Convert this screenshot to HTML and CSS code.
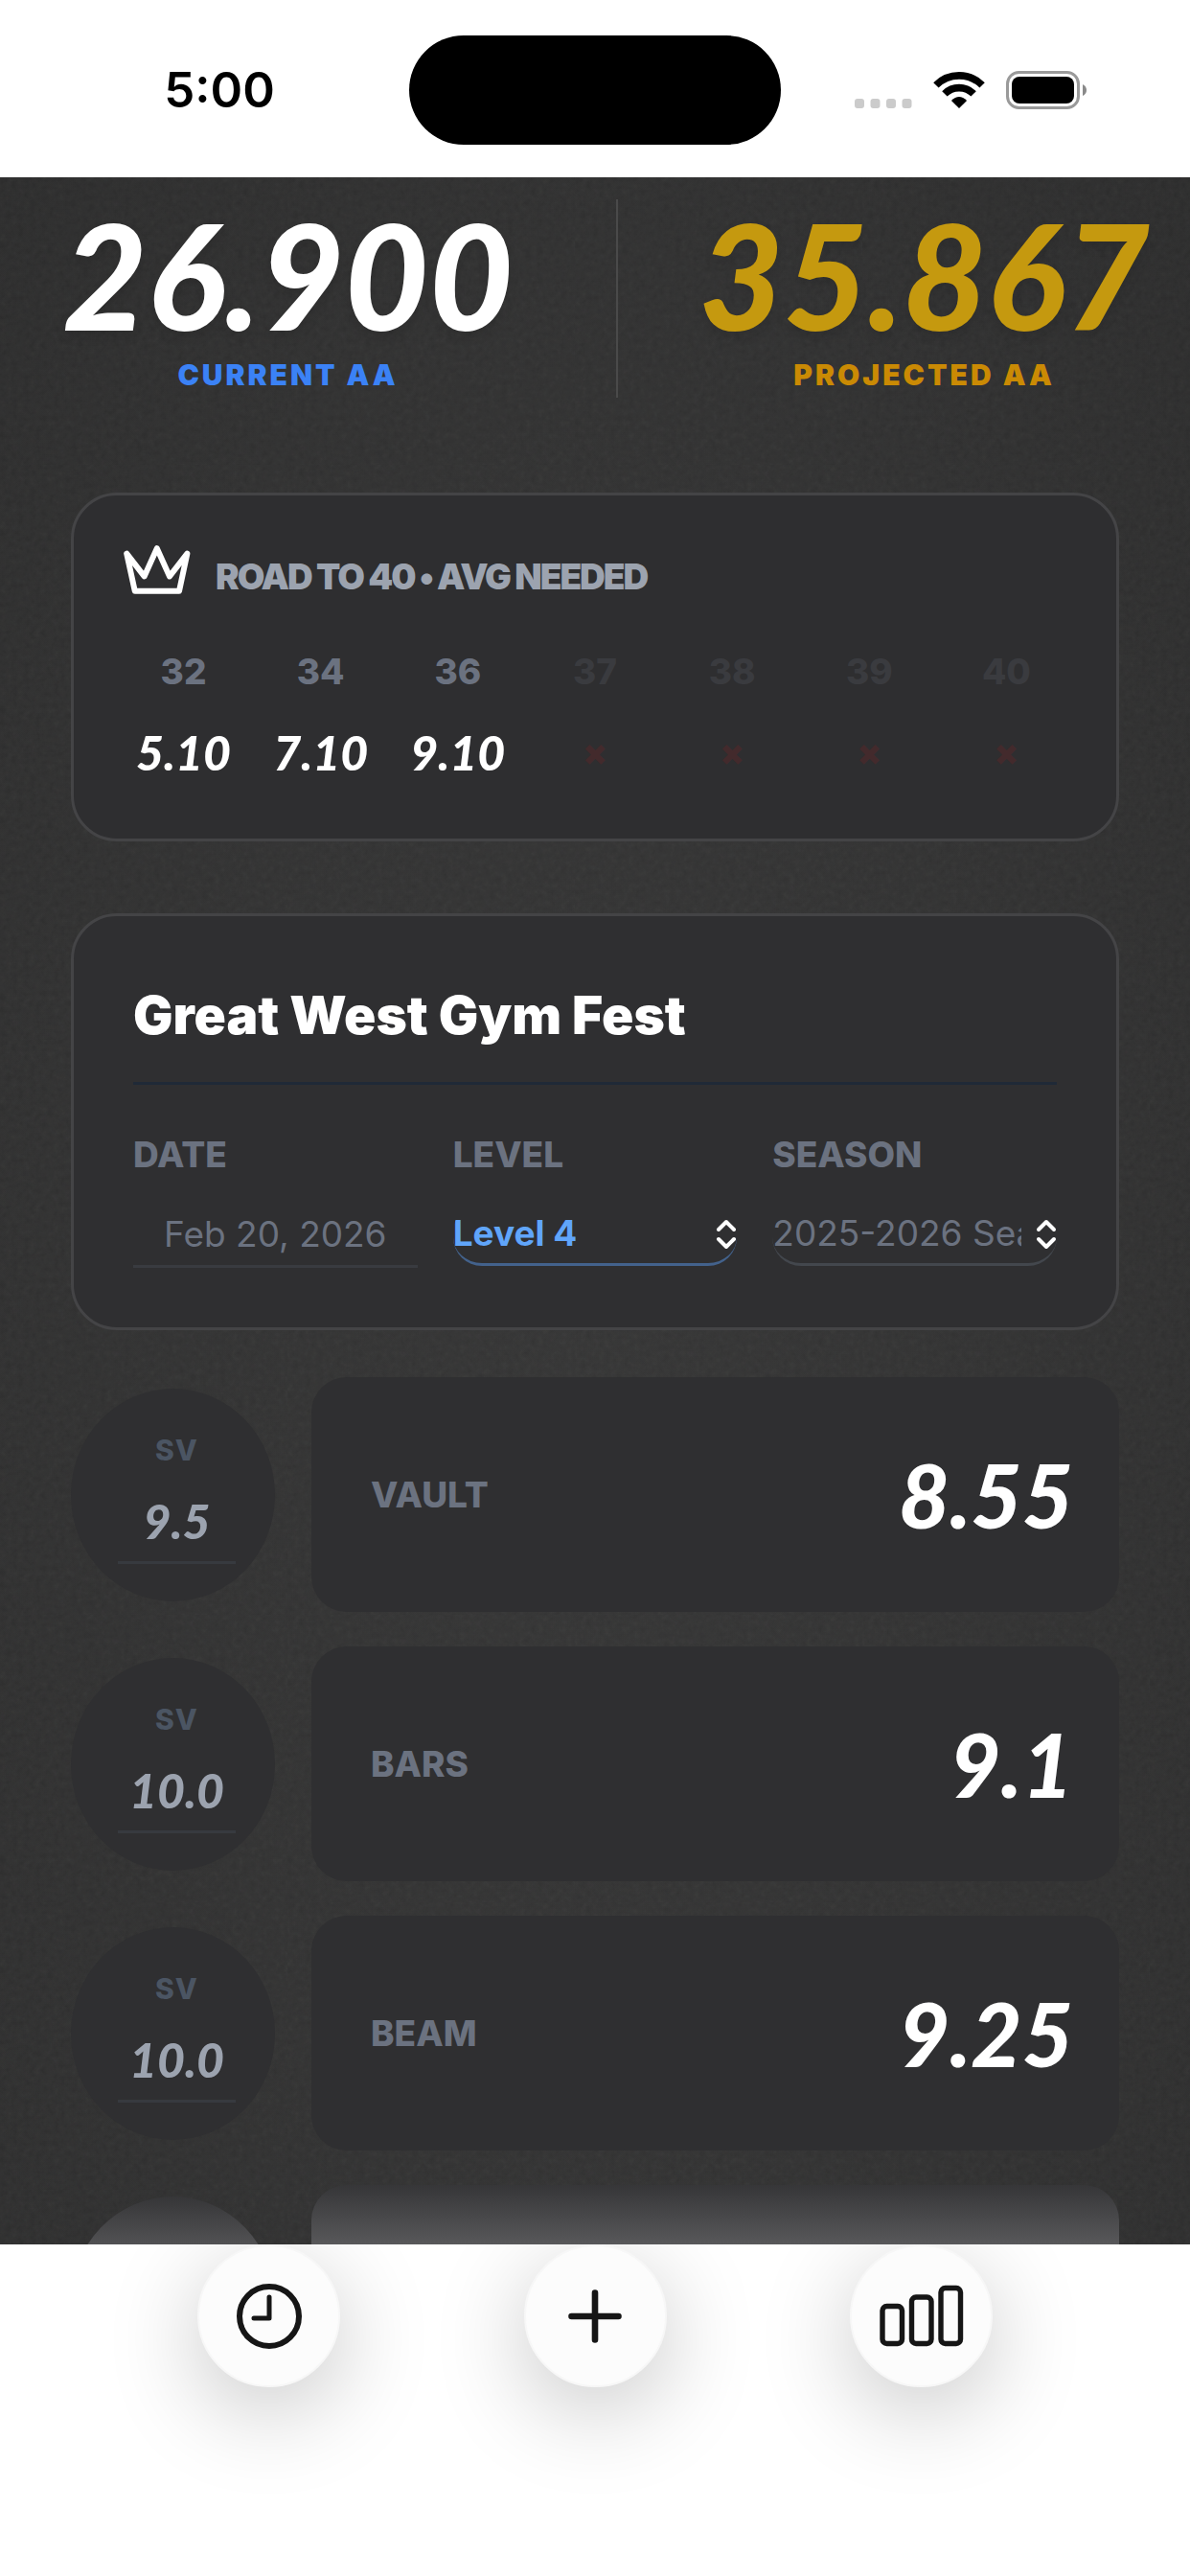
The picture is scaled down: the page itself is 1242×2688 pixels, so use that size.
FILE: index.html
```html
<!DOCTYPE html>
<html lang="en">
<head>
    <meta charset="UTF-8">
    <meta name="viewport" content="width=device-width, initial-scale=1.0">
    <title>Meet Scores</title>
    <link rel="stylesheet" href="styles.css">
</head>
<body>
    <div class="status-bar">
        <div class="status-time">5:00</div>
        <div class="island"></div>
        <div class="status-icons">
            <svg class="icon-signal" width="60" height="40" viewBox="0 0 60 40" fill="#cbcbcb">
                <rect x="0" y="29" width="10" height="10" rx="3"/>
                <rect x="16.5" y="29" width="10" height="10" rx="3"/>
                <rect x="33" y="29" width="10" height="10" rx="3"/>
                <rect x="49.5" y="29" width="10" height="10" rx="3"/>
            </svg>
            <svg class="icon-wifi" width="54" height="40" viewBox="0 0 54 40" fill="none" stroke="#000" stroke-width="7.6">
                <path d="M2.9 14.9 A34.1 34.1 0 0 1 51.1 14.9"/>
                <path d="M11.9 23.9 A21.4 21.4 0 0 1 42.1 23.9"/>
                <path d="M27 39 L18.9 30.9 Q27 23 35.1 30.9 Z" fill="#000" stroke="none"/>
            </svg>
            <svg class="icon-battery" width="86" height="40" viewBox="0 0 86 40">
                <rect x="1.5" y="1.5" width="74" height="37" rx="12" fill="none" stroke="#9a9a9a" stroke-width="3"/>
                <rect x="6" y="6" width="65" height="28" rx="8" fill="#000"/>
                <path d="M80 14 Q84 16 84 20 Q84 24 80 26 Z" fill="#8a8a8a"/>
            </svg>
        </div>
    </div>

    <main class="board">
        <section class="totals">
            <div class="total">
                <div class="total-value">26.900</div>
                <div class="total-label">CURRENT AA</div>
            </div>
            <div class="totals-divider"></div>
            <div class="total projected">
                <div class="total-value">35.867</div>
                <div class="total-label">PROJECTED AA</div>
            </div>
        </section>

        <section class="card road">
            <div class="road-head">
                <svg width="70" height="51" viewBox="0 0 70 51" fill="none" stroke="#fff" stroke-width="6" stroke-linejoin="round">
                    <path d="M3.2 8.6 L21.6 32.4 L34.8 3.2 L48 32.4 L66.4 8.6 L58 47.8 L11.8 47.8 Z"/>
                </svg>
                <h2>ROAD TO 40 • AVG NEEDED</h2>
            </div>
            <table class="road-table">
                <thead>
                    <tr>
                        <th>32</th>
                        <th>34</th>
                        <th>36</th>
                        <th class="off">37</th>
                        <th class="off">38</th>
                        <th class="off">39</th>
                        <th class="off">40</th>
                    </tr>
                </thead>
                <tbody>
                    <tr>
                        <td>5.10</td>
                        <td>7.10</td>
                        <td>9.10</td>
                        <td class="off">×</td>
                        <td class="off">×</td>
                        <td class="off">×</td>
                        <td class="off">×</td>
                    </tr>
                </tbody>
            </table>
        </section>

        <section class="card meet">
            <input class="meet-name" type="text" value="Great West Gym Fest" aria-label="Meet name">
            <div class="fields">
                <div class="field">
                    <label for="date">DATE</label>
                    <input id="date" class="date" type="text" value="Feb 20, 2026">
                </div>
                <div class="field">
                    <label for="level">LEVEL</label>
                    <select id="level" class="picker level">
                        <option>Level 3</option>
                        <option selected>Level 4</option>
                        <option>Level 5</option>
                    </select>
                </div>
                <div class="field">
                    <label for="season">SEASON</label>
                    <select id="season" class="picker">
                        <option>2025-2026 Season</option>
                        <option>2024-2025 Season</option>
                    </select>
                </div>
            </div>
        </section>

        <section class="events">
            <div class="event">
                <div class="sv">
                    <label for="sv-vault">SV</label>
                    <input id="sv-vault" type="text" inputmode="decimal" value="9.5">
                </div>
                <div class="event-card">
                    <label for="vault">VAULT</label>
                    <input id="vault" type="text" inputmode="decimal" value="8.55">
                </div>
            </div>
            <div class="event">
                <div class="sv">
                    <label for="sv-bars">SV</label>
                    <input id="sv-bars" type="text" inputmode="decimal" value="10.0">
                </div>
                <div class="event-card">
                    <label for="bars">BARS</label>
                    <input id="bars" type="text" inputmode="decimal" value="9.1">
                </div>
            </div>
            <div class="event">
                <div class="sv">
                    <label for="sv-beam">SV</label>
                    <input id="sv-beam" type="text" inputmode="decimal" value="10.0">
                </div>
                <div class="event-card">
                    <label for="beam">BEAM</label>
                    <input id="beam" type="text" inputmode="decimal" value="9.25">
                </div>
            </div>
            <div class="event fading">
                <div class="sv"></div>
                <div class="event-card"></div>
            </div>
        </section>
    </main>

    <nav class="tab-bar">
        <button class="tab" type="button" aria-label="History">
            <svg width="70" height="70" viewBox="0 0 70 70" fill="none" stroke="#161616" stroke-width="6" stroke-linecap="round" stroke-linejoin="round">
                <circle cx="35" cy="35" r="31"/>
                <path d="M35 15 V37 H19" stroke-width="5"/>
            </svg>
        </button>
        <button class="tab" type="button" aria-label="Add meet">
            <svg width="70" height="70" viewBox="0 0 70 70" fill="none" stroke="#161616" stroke-width="6.6" stroke-linecap="round">
                <path d="M35 10.5 V59.5 M10.5 35 H59.5"/>
            </svg>
        </button>
        <button class="tab" type="button" aria-label="Stats">
            <svg width="88" height="70" viewBox="0 0 88 70" fill="none" stroke="#161616" stroke-width="5.4">
                <rect x="3" y="24.5" width="20.5" height="39" rx="4.5"/>
                <rect x="33.5" y="15" width="20.5" height="48.5" rx="4.5"/>
                <rect x="64" y="5.5" width="20.5" height="58" rx="4.5"/>
            </svg>
        </button>
    </nav>
</body>
</html>
```
FILE: styles.css
```css
* {
    box-sizing: border-box;
}
body {
    display: flex;
    flex-direction: column;
    height: 100vh;
    margin: 0;
    background-color: #fff;
    color: #fff;
    font-family: Inter, "Liberation Sans", sans-serif;
}
input, select, button {
    margin: 0;
    padding: 0;
    border: none;
    border-radius: 0;
    background: none;
    color: inherit;
    font: inherit;
    outline: none;
}
svg {
    display: block;
}

/* Status bar */
.status-bar {
    display: grid;
    grid-template-columns: 1fr 388px 1fr;
    align-items: center;
    flex: none;
    height: 185px;
    padding-top: 2px;
}
.status-time {
    padding-left: 31px;
    color: #000;
    font-size: 51px;
    font-weight: 600;
    text-align: center;
}
.island {
    height: 114px;
    border-radius: 57px;
    background-color: #000;
}
.status-icons {
    display: flex;
    justify-content: center;
    gap: 22px;
    padding-right: 30px;
}

/* Dark board */
.board {
    flex: 1;
    min-height: 0;
    overflow: hidden;
    padding: 23px 0 0;
    background-color: #303030;
    background-image:
        url("data:image/svg+xml,%3Csvg xmlns='http://www.w3.org/2000/svg' width='300' height='300'%3E%3Cfilter id='n'%3E%3CfeTurbulence type='fractalNoise' baseFrequency='0.16' numOctaves='3' stitchTiles='stitch'/%3E%3CfeColorMatrix type='saturate' values='0.3'/%3E%3C/filter%3E%3Crect width='300' height='300' filter='url(%23n)' opacity='0.06'/%3E%3C/svg%3E"),
        radial-gradient(ellipse at 50% 60%, #343434 0%, #313131 50%, #2b2b2b 100%);
}
.totals {
    display: grid;
    grid-template-columns: 13fr 2px 12fr;
    column-gap: 42px;
    height: 207px;
    margin-bottom: 99px;
    text-align: center;
}
.totals-divider {
    background-color: #4a4a4a;
}
.total {
    padding-top: 20px;
}
.total-value {
    margin-bottom: 23px;
    font-family: "Permanent Marker", Lato, sans-serif;
    font-size: 152px;
    font-style: italic;
    font-weight: 900;
    line-height: 116px;
    text-shadow: 0 6px 12px rgba(0, 0, 0, 0.1);
}
.total-label {
    padding-top: 4px;
    color: #3b82f6;
    font-size: 30px;
    font-weight: 900;
    letter-spacing: 3px;
    line-height: 40px;
}
.projected .total-value {
    color: #c5990f;
}
.projected .total-label {
    color: #ca8a04;
}

/* Cards */
.card {
    margin: 0 74px;
    border: 3px solid #444446;
    border-radius: 48px;
    background-color: #2e2e30;
}
.road {
    margin-bottom: 75px;
    padding: 52px 43px 60px;
}
.road-head {
    display: flex;
    align-items: flex-end;
    gap: 26px;
    margin-bottom: 59px;
    padding-left: 9px;
}
.road-head h2 {
    margin: 0;
    color: #9ca3af;
    font-size: 37px;
    font-weight: 900;
    letter-spacing: -2px;
    line-height: 36px;
}
.road-table {
    width: 100%;
    border-collapse: collapse;
    table-layout: fixed;
    text-align: center;
}
.road-table th {
    padding: 0 0 32px;
    color: #6b7280;
    font-size: 37px;
    font-weight: 800;
    line-height: 44px;
}
.road-table td {
    padding: 0;
    font-family: "Permanent Marker", Lato, sans-serif;
    font-size: 50px;
    font-style: italic;
    font-weight: 900;
    line-height: 60px;
}
.road-table th.off {
    color: #3a3b3f;
}
.road-table td.off {
    color: #432a2c;
    font-family: Inter, sans-serif;
    font-size: 37px;
    font-style: normal;
    font-weight: 900;
}
.meet {
    margin-bottom: 49px;
    padding: 70px 62px 62px;
    background-color: #2f2f31;
}
.meet-name {
    display: block;
    width: 100%;
    height: 106px;
    margin-bottom: 51px;
    padding-bottom: 37px;
    border-bottom: 3px solid #1f2937;
    font-size: 55px;
    font-weight: 900;
}
.fields {
    display: grid;
    grid-template-columns: repeat(3, minmax(0, 1fr));
    gap: 37px;
}
.field label {
    display: block;
    margin-bottom: 28px;
    color: #6b7280;
    font-size: 37px;
    font-weight: 800;
    line-height: 44px;
}
.date {
    display: block;
    width: 100%;
    height: 68px;
    border-bottom: 3px solid #393b40;
    color: #6b7280;
    font-size: 37px;
    text-align: center;
}
.picker {
    display: block;
    width: 100%;
    height: 66px;
    padding-right: 37px;
    border-bottom: 3px solid #43474d;
    border-radius: 30px;
    appearance: none;
    background: url("data:image/svg+xml,%3Csvg xmlns='http://www.w3.org/2000/svg' width='22' height='32' fill='none' stroke='white' stroke-width='4' stroke-linecap='round' stroke-linejoin='round'%3E%3Cpath d='M3 11 L11 3 L19 11 M3 21 L11 29 L19 21'/%3E%3C/svg%3E") no-repeat right 17px;
    color: #6b7280;
    font-size: 37px;
}
.level {
    border-bottom-color: #43628c;
    color: #60a5fa;
    font-weight: 700;
}

/* Events */
.events {
    display: flex;
    flex-direction: column;
    gap: 36px;
    padding: 0 74px;
}
.event {
    display: flex;
    align-items: center;
    gap: 38px;
}
.sv {
    flex: none;
    width: 213px;
    height: 222px;
    padding: 44px 41px 0 49px;
    border-radius: 50%;
    background-color: #2f2f31;
    text-align: center;
}
.sv label {
    display: block;
    margin-bottom: 12px;
    color: #4b5563;
    font-size: 30px;
    font-weight: 800;
    letter-spacing: 1px;
    line-height: 40px;
}
.sv input {
    display: block;
    width: 100%;
    height: 87px;
    border-bottom: 3px solid #373a3f;
    color: #9ca3af;
    font-family: "Permanent Marker", Lato, sans-serif;
    font-size: 50px;
    font-style: italic;
    font-weight: 900;
    text-align: center;
}
.event-card {
    display: flex;
    flex: 1;
    align-items: center;
    justify-content: space-between;
    min-width: 0;
    height: 245px;
    padding: 0 48px 0 62px;
    border-radius: 37px;
    background-color: #2f2f31;
}
.event-card label {
    color: #6b7280;
    font-size: 37px;
    font-weight: 800;
}
.event-card input {
    width: 50%;
    height: 120px;
    font-family: "Permanent Marker", Lato, sans-serif;
    font-size: 92px;
    font-style: italic;
    font-weight: 900;
    text-align: right;
}
.fading .sv,
.fading .event-card {
    background: linear-gradient(#363638, #58585a 62px);
}

/* Bottom buttons */
.tab-bar {
    display: flex;
    flex: none;
    justify-content: space-between;
    height: 346px;
    padding: 0 206px;
    overflow: hidden;
    background-color: #fff;
}
.tab {
    display: flex;
    align-items: center;
    justify-content: center;
    width: 149px;
    height: 149px;
    border: 2px solid #f7f7f7;
    border-radius: 50%;
    background-color: #fcfcfc;
    box-shadow: 0 24px 96px rgba(0, 0, 0, 0.22);
    cursor: pointer;
}
```
